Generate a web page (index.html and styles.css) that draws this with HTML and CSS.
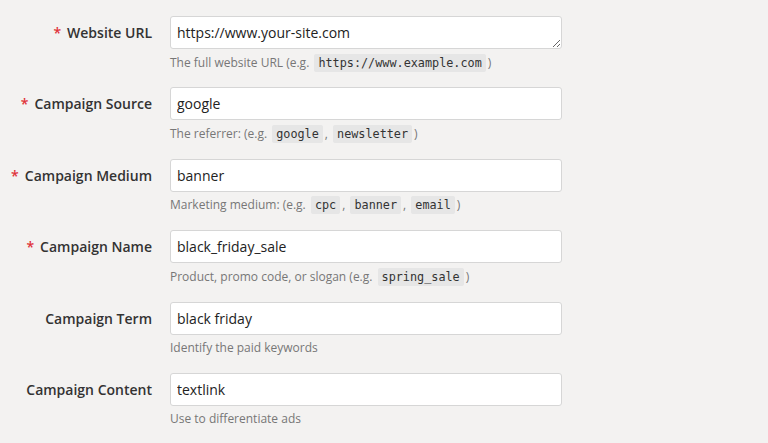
FILE: index.html
```html
<!DOCTYPE html>
<html lang="en">
<head>
  <meta charset="UTF-8">
  <title>Campaign URL Builder</title>
  <link rel="stylesheet" href="styles.css">
</head>
<body>
  <form class="builder">
    <div class="row">
      <label class="label" for="url"><span class="req">*</span> Website URL</label>
      <div class="field">
        <textarea id="url" class="input area" rows="1">https://www.your-site.com</textarea>
        <div class="help">The full website URL (e.g. <code>https://www.example.com</code>)</div>
      </div>
    </div>
    <div class="row">
      <label class="label" for="source"><span class="req">*</span> Campaign Source</label>
      <div class="field">
        <input id="source" class="input" value="google">
        <div class="help">The referrer: (e.g. <code>google</code>, <code>newsletter</code>)</div>
      </div>
    </div>
    <div class="row">
      <label class="label" for="medium"><span class="req">*</span> Campaign Medium</label>
      <div class="field">
        <input id="medium" class="input" value="banner">
        <div class="help">Marketing medium: (e.g. <code>cpc</code>, <code>banner</code>, <code>email</code>)</div>
      </div>
    </div>
    <div class="row">
      <label class="label" for="name"><span class="req">*</span> Campaign Name</label>
      <div class="field">
        <input id="name" class="input" value="black_friday_sale">
        <div class="help">Product, promo code, or slogan (e.g. <code>spring_sale</code>)</div>
      </div>
    </div>
    <div class="row">
      <label class="label" for="term">Campaign Term</label>
      <div class="field">
        <input id="term" class="input" value="black friday">
        <div class="help">Identify the paid keywords</div>
      </div>
    </div>
    <div class="row">
      <label class="label" for="content">Campaign Content</label>
      <div class="field">
        <input id="content" class="input" value="textlink">
        <div class="help">Use to differentiate ads</div>
      </div>
    </div>
  </form>
</body>
</html>
```
FILE: styles.css
```css
body {
  margin: 0;
  background: #f3f2f1;
  font-family: "Open Sans", sans-serif;
  color: #333;
}

.builder {
  padding-top: 16px;
}

.row {
  display: grid;
  grid-template-columns: 152px 392px;
  column-gap: 18px;
  margin-bottom: 15.9px;
}

.label {
  height: 33px;
  display: flex;
  align-items: center;
  justify-content: flex-end;
  font-size: 14px;
  font-weight: 600;
  color: #333;
}

.req {
  color: #e0333a;
  margin-right: 6px;
}

.input {
  box-sizing: border-box;
  display: block;
  width: 100%;
  height: 33px;
  margin: 0;
  padding: 5px 6px;
  border: 1px solid #d6d6d6;
  border-radius: 3px;
  background: #fff;
  font-family: "Open Sans", sans-serif;
  font-size: 14px;
  color: #222;
}

.area {
  resize: vertical;
  line-height: 21px;
  overflow: hidden;
}

.help {
  margin-top: 4.5px;
  font-size: 12px;
  line-height: 18px;
  color: #777;
}

code {
  font-family: "DejaVu Sans Mono", monospace;
  font-size: 11.8px;
  color: #333;
  background: #e6e6e6;
  border-radius: 2px;
  padding: 2px 4px;
  margin: 0 2px;
}
```
